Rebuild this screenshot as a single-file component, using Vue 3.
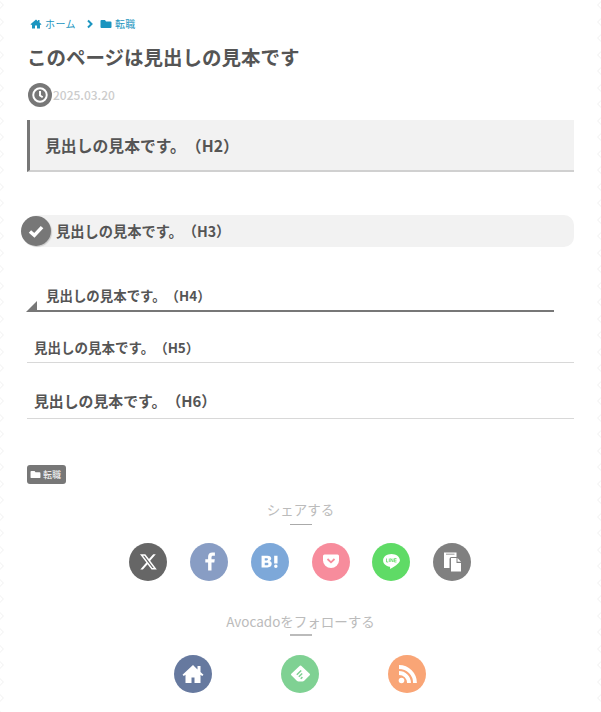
<script setup>
const shares = [
  { cls: 'x', label: 'X' },
  { cls: 'fb', label: 'Facebook' },
  { cls: 'hb', label: 'Hatena' },
  { cls: 'pk', label: 'Pocket' },
  { cls: 'ln', label: 'LINE' },
  { cls: 'cp', label: 'Copy' }
]
const diamonds = Array.from({ length: 44 }, (_, i) => i)
</script>

<template>
  <div class="page">
    <div class="edge left"><i v-for="d in diamonds" :key="d"></i></div>
    <div class="edge right"><i v-for="d in diamonds" :key="d"></i></div>
    <main class="content">
      <nav class="crumbs">
        <svg class="ic" viewBox="0 0 24 20"><path d="M12 1 1 10.500l1.500 1.700L4 11v8h6v-6h4v6h6v-8l1.500 1.200 1.500-1.700L19 7V2h-3v2.500z" /></svg>
        <span>ホーム</span>
        <svg class="chev" viewBox="0 0 8 10"><path d="M2 1.500l3.500 3.500L2 8.500" /></svg>
        <svg class="ic folder" viewBox="0 0 24 20"><path d="M1 4a2 2 0 0 1 2-2h7l2 3h9a2 2 0 0 1 2 2v9a2 2 0 0 1-2 2H3a2 2 0 0 1-2-2z" /></svg>
        <span>転職</span>
      </nav>
      <h1>このページは見出しの見本です</h1>
      <div class="date">
        <span class="clock"><svg viewBox="0 0 20 20"><circle cx="10" cy="10" r="7.500" /><path d="M10 5.500V10.500L13 12.500" /></svg></span>
        <span class="date-text">2025.03.20</span>
      </div>
      <h2>見出しの見本です。（H2）</h2>
      <h3>
        <span class="check"><svg viewBox="0 0 20 20"><path d="M4.500 10.500 8.500 14 15.500 6.500" /></svg></span>
        見出しの見本です。（H3）
      </h3>
      <h4>見出しの見本です。（H4）</h4>
      <h5>見出しの見本です。（H5）</h5>
      <h6>見出しの見本です。（H6）</h6>
      <div class="tag">
        <svg viewBox="0 0 24 20"><path d="M1 4a2 2 0 0 1 2-2h7l2 3h9a2 2 0 0 1 2 2v9a2 2 0 0 1-2 2H3a2 2 0 0 1-2-2z" /></svg>
        <span>転職</span>
      </div>
      <p class="sec-title share-title">シェアする</p>
      <div class="rule"></div>
      <div class="shares">
        <span v-for="s in shares" :key="s.cls" class="btn" :class="s.cls" :aria-label="s.label">
          <svg v-if="s.cls === 'x'" viewBox="0 0 38 38"><path class="fill" transform="translate(10 9.500) scale(.78)" d="M18.244 2.250h3.308l-7.227 8.260 8.502 11.240H16.170l-5.214-6.817L4.990 21.750H1.680l7.730-8.835L1.254 2.250H8.080l4.713 6.231zm-1.161 17.520h1.833L7.084 4.126H5.117z" /></svg>
          <svg v-else-if="s.cls === 'fb'" viewBox="0 0 38 38"><path class="fill" d="M21.500 27.500v-8h2.800l.5-3.200h-3.300v-2c0-1 .4-1.600 1.700-1.600h1.700V9.600c-.5-.1-1.500-.2-2.500-.2-2.700 0-4.300 1.500-4.300 4.300v2.600h-2.800v3.200h2.800v8z" /></svg>
          <svg v-else-if="s.cls === 'hb'" viewBox="0 0 38 38"><path class="fill" transform="translate(3 3) scale(.84)" fill-rule="evenodd" d="M9 11.500h7c3 0 4.500 1.300 4.500 3.400 0 1.500-.8 2.500-2.200 3 1.800.4 2.800 1.600 2.800 3.300 0 2.600-1.900 4.300-5 4.300H9zm3.800 3v2.700H15c1 0 1.600-.5 1.600-1.400s-.6-1.300-1.600-1.300zm0 5.300v3H15.400c1.100 0 1.800-.5 1.800-1.500s-.7-1.500-1.800-1.500zM24 11.500h4v9.200h-4zM26 22a2.100 2.100 0 1 1 0 4.200 2.100 2.100 0 0 1 0-4.200z" /></svg>
          <svg v-else-if="s.cls === 'pk'" viewBox="0 0 38 38"><path class="fill" d="M12.500 11.500h13a1.500 1.500 0 0 1 1.500 1.500v4.500a8 7.500 0 0 1-16 0V13a1.500 1.500 0 0 1 1.500-1.500z" /><path class="pkv" d="M15.500 16l3.500 3.300 3.500-3.300" /></svg>
          <svg v-else-if="s.cls === 'ln'" viewBox="0 0 38 38"><path class="fill" d="M19.500 11c-4.700 0-8.400 2.800-8.400 6.400 0 3.100 2.800 5.700 6.600 6.300.4.100.5.300.4.700l-.1 1c0 .3.200.4.500.3 2.300-1.100 5.400-3 7.200-5 1.300-1.200 2.200-2.300 2.200-3.300C27.900 13.800 24.200 11 19.500 11z" /><path class="lnt" d="M14.500 15.500v3.500h1.700M17.300 15.500v3.500M18.800 19v-3.500l2.200 3.500v-3.500M24.500 15.500h-2.100V19h2.100M22.400 17.200h2.100" /></svg>
          <svg v-else viewBox="0 0 38 38"><path class="fill" d="M11 9.500h12.500V14h-5a2 2 0 0 0-2 2v9H11z" /><path class="cpl" d="M13 11.200h8.500" /><path class="fill" d="M18 15h5.500v5H28v8.500H18z" /><path class="fill" d="M24.500 15l3.500 3.800h-3.500z" /></svg>
        </span>
      </div>
      <p class="sec-title follow-title">Avocadoをフォローする</p>
      <div class="rule thick"></div>
      <div class="follows">
        <span class="btn home" aria-label="Home"><svg viewBox="0 0 38 38"><path class="fill" d="M19 10 8.500 19.800l1.300 1.300 1.700-1.400V28h6v-5.500h3V28h6v-8.300l1.700 1.400 1.300-1.300-3-2.800V11h-3v3.500z" /></svg></span>
        <span class="btn feedly" aria-label="Feedly"><svg viewBox="0 0 38 38"><path class="fdl" d="M19.500 11.500 28 19.500l-5.500 5.500a1.600 1.600 0 0 1-1.200.5h-3.600a1.600 1.600 0 0 1-1.200-.5L11 19.500z" /><path class="fds" d="M15.800 19.800 20.200 15.500M17.800 21.800 21.200 18.500M19.700 23.800 21.400 22.100" /></svg></span>
        <span class="btn rss" aria-label="RSS"><svg viewBox="0 0 38 38"><circle class="fill" cx="13.500" cy="25.500" r="2.800" /><path class="rs" d="M11 18a10 10 0 0 1 10 10M11 12a16 16 0 0 1 16 16" /></svg></span>
      </div>
    </main>
  </div>
</template>

<style scoped>
.page {
  position: relative;
  width: 601px;
  height: 712px;
  overflow: hidden;
  background: #fff;
  color: #555;
  font-family: "Noto Sans CJK JP", "Noto Sans", sans-serif;
  text-spacing-trim: space-all;
}
.edge {
  position: absolute;
  top: 0;
  display: flex;
  flex-direction: column;
  gap: 6.500px;
}
.edge i {
  display: block;
  width: 10px;
  height: 10px;
  flex: none;
  border: 1px solid #f4f4f4;
  box-sizing: border-box;
  transform: rotate(45deg);
}
.edge.left { left: -8px; }
.edge.right { right: -8px; }
.content {
  position: relative;
  padding: 0 27px;
}
.crumbs {
  height: 47px;
  padding-left: 3px;
  display: flex;
  align-items: center;
  gap: 3px;
  color: #1b95c0;
  font-size: 10px;
  letter-spacing: .4px;
}
.ic { width: 12px; height: 10px; fill: #1b95c0; }
.folder { margin-left: 3px; }
.chev { width: 8px; height: 10px; margin-left: 7px; fill: none; stroke: #1b95c0; stroke-width: 2; }
h1, h2, h3, h4, h5, h6, p { margin: 0; font-weight: 700; }
h1 {
  font-size: 19.500px;
  line-height: 20px;
  color: #555;
}
.date {
  margin-top: 16px;
  height: 24px;
  display: flex;
  align-items: center;
  gap: 1px;
  color: #ccc;
  font-size: 12px;
  font-weight: 500;
  margin-left: 1px;
}
.date-text { margin-top: -2px; }
.clock {
  width: 24px;
  height: 24px;
  border-radius: 50%;
  background: #777;
  display: flex;
  align-items: center;
  justify-content: center;
}
.clock svg { width: 18px; height: 18px; fill: none; stroke: #fff; stroke-width: 2.200; }
h2 {
  margin-top: 13px;
  height: 52px;
  box-sizing: border-box;
  padding-left: 15px;
  display: flex;
  align-items: center;
  font-size: 15.840px;
  background: #f2f2f2;
  border-left: 3px solid #777;
  border-bottom: 2px solid #d0d0d0;
}
h3 {
  position: relative;
  margin-top: 43px;
  height: 32px;
  box-sizing: border-box;
  padding-bottom: 1px;
  display: flex;
  align-items: center;
  padding-left: 29px;
  font-size: 14.240px;
  background: #f2f2f2;
  border-radius: 10px;
}
.check {
  position: absolute;
  left: -6px;
  top: 1px;
  width: 30px;
  height: 30px;
  border-radius: 50%;
  background: #777;
  box-shadow: 1px 1px 1px #ccc;
  display: flex;
  align-items: center;
  justify-content: center;
}
.check svg { width: 22px; height: 22px; fill: none; stroke: #fff; stroke-width: 3.200; }
h4 {
  position: relative;
  margin: 41px 20px 0 10px;
  height: 24px;
  box-sizing: border-box;
  padding-left: 9px;
  padding-bottom: 8px;
  display: flex;
  align-items: center;
  font-size: 13.440px;
  border-bottom: 2px solid #777;
}
h4::before {
  content: "";
  position: absolute;
  left: -11px;
  bottom: -2px;
  border-style: solid;
  border-width: 0 0 11px 11px;
  border-color: transparent transparent #777 transparent;
}
h5 {
  margin-top: 24px;
  height: 27px;
  box-sizing: border-box;
  padding-left: 7px;
  padding-bottom: 4px;
  display: flex;
  align-items: center;
  font-size: 13.500px;
  border-bottom: 1px solid #d8d8d8;
}
h6 {
  margin-top: 22px;
  height: 34px;
  box-sizing: border-box;
  padding-left: 7px;
  padding-bottom: 3px;
  display: flex;
  align-items: center;
  font-size: 14.880px;
  border-bottom: 1px solid #d8d8d8;
}
.tag {
  margin-top: 46px;
  width: 39px;
  height: 19px;
  box-sizing: border-box;
  padding-left: 3px;
  display: flex;
  align-items: center;
  gap: 2px;
  border-radius: 3px;
  background: #777;
  color: #fff;
  font-size: 9px;
}
.tag svg { width: 11px; height: 9px; fill: #fff; }
.sec-title {
  text-align: center;
  font-size: 13.500px;
  font-weight: 400;
  line-height: 19px;
  color: #bbb;
}
.share-title { margin-top: 16px; }
.follow-title { margin-top: 31px; }
.rule {
  width: 22px;
  height: 1px;
  margin: 5px auto 0;
  background: #aaa;
}
.rule.thick { height: 2px; margin-top: 3px; background: #bbb; }
.shares {
  margin-top: 18px;
  display: flex;
  justify-content: flex-start;
  padding-left: 102px;
  gap: 23px;
}
.btn.ln { margin-left: -1px; }
.follows {
  margin-top: 19px;
  padding-right: 1px;
  display: flex;
  justify-content: center;
  gap: 69px;
}
.btn {
  width: 38px;
  height: 38px;
  border-radius: 50%;
  display: block;
  flex: none;
}
.btn svg { display: block; width: 38px; height: 38px; }
.fill { fill: #fff; }
.x { background: #666; }
.fb { background: #889dc4; }
.hb { background: #7da8d9; }
.pk { background: #f78c9c; }
.pkv { fill: none; stroke: #f78c9c; stroke-width: 1.800; }
.ln { background: #5fdb66; }
.lnt { fill: none; stroke: #5fdb66; stroke-width: .8; }
.cp { background: #808080; }
.cpl { fill: none; stroke: #808080; stroke-width: .8; }
.home { background: #66799f; }
.feedly { background: #7fd193; }
.fdl { fill: #fff; stroke: #fff; stroke-width: 2; stroke-linejoin: round; }
.fds { fill: none; stroke: #7fd193; stroke-width: 1.500; }
.rss { background: #f9a576; }
.rs { fill: none; stroke: #fff; stroke-width: 3.800; }
</style>
